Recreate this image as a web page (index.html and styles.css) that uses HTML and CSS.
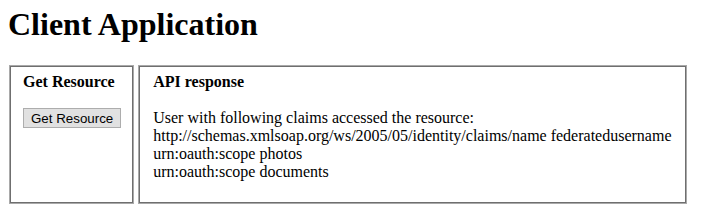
FILE: index.html
```html
<!DOCTYPE html>
<html lang="en">
<head>
	<meta charset="UTF-8">
	<title>Client Application</title>
	<link rel="stylesheet" href="styles.css">
</head>
<body>
	<h1>Client Application</h1>
	<main class="panels">
		<section class="panel actions">
			<div class="title">Get Resource</div>
			<button id="btnGet">Get Resource</button>
		</section>
		<section class="panel response">
			<div class="title">API response</div>
			<div id="result">
				User with following claims accessed the resource:<br>
				http://schemas.xmlsoap.org/ws/2005/05/identity/claims/name federatedusername<br>
				urn:oauth:scope photos<br>
				urn:oauth:scope documents
			</div>
		</section>
	</main>
</body>
</html>
```

FILE: styles.css
```css
body {
	background: #fff;
	color: #000;
	font: 16px/18px "Liberation Serif", "Times New Roman", serif;
	margin: 0px;
	padding: 6px 8px 0px;
}
h1 {
	font-size: 32px;
	line-height: normal;
	margin: 0px 0px 22px;
}
/* panels */
main.panels {
	align-items: stretch;
	display: flex;
	gap: 4px;
	margin-left: 1px;
}
section.panel {
	border: 1px solid #a9a9a9;
	box-shadow: inset 0px 0px 0px 1px #6f6f6f;
	padding: 7px 15px 22px 14px;
}
section.panel div.title {
	font-weight: bold;
	margin-bottom: 18px;
}
section.actions {
	padding-left: 13px;
	padding-right: 12px;
}
section.actions button {
	background-color: #e1e1e1;
	border: 1px solid #adadad;
	color: #000;
	display: block;
	font: 13.33px "Liberation Sans", Arial, sans-serif;
	height: 20px;
	margin-top: -1px;
	padding: 0px 7px;
}
section.actions button:hover {
	background-color: #e5f1fb;
	border-color: #0078d7;
	cursor: pointer;
}
```
